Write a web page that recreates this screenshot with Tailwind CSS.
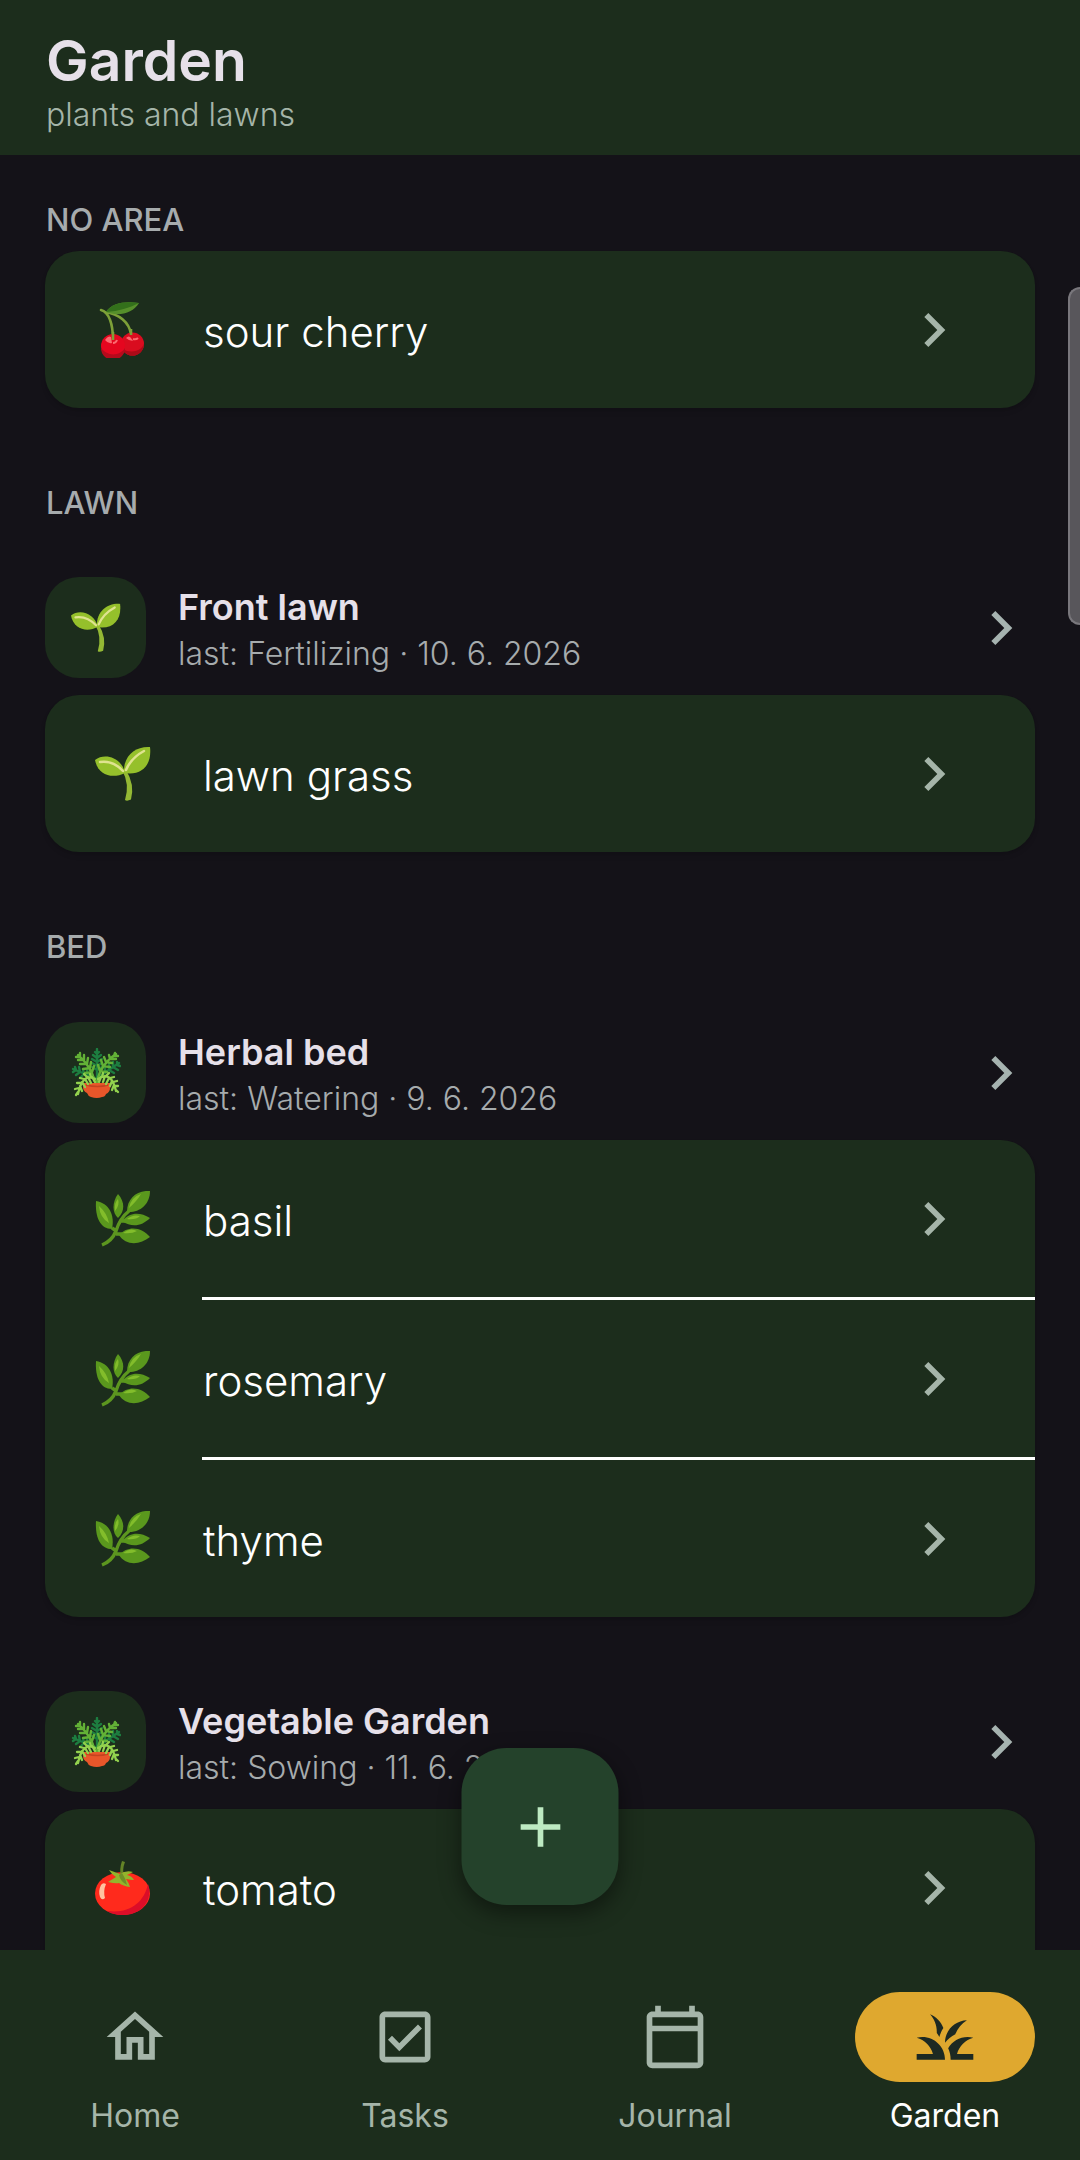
<!DOCTYPE html>
<html lang="en">
<head>
  <meta charset="UTF-8" />
  <meta name="viewport" content="width=device-width, initial-scale=1.0"/>
  <title>Garden</title>
  <script src="https://cdn.jsdelivr.net/npm/@tailwindcss/browser@4"></script>
</head>
<body class="h-screen flex flex-col bg-[#141218] text-[#a5b5a9] font-['Inter','Liberation_Sans',sans-serif]">

  <!-- shared icons -->
  <svg class="hidden">
    <symbol id="chevron" viewBox="0 0 24 24">
      <path fill="currentColor" d="M10 6L8.59 7.41 13.17 12l-4.58 4.59L10 18l6-6z"/>
    </symbol>
    <symbol id="cherry" viewBox="0 0 56 56">
      <path d="M6 8C14 10 18 22 18 38M10 10C24 12 34 20 36 32" fill="none" stroke="#7da038" stroke-width="2.6" stroke-linecap="round"/>
      <path d="M11 10C17 1 29-1 44 1 38 11 24 15 11 10z" fill="#568f2b"/>
      <path d="M11 10C17 1 29-1 44 1 34 6 24 9 11 10z" fill="#33701b"/>
      <circle cx="37.5" cy="42" r="11.5" fill="#d90c1f"/>
      <path d="M27 47a11.5 11.5 0 0 0 22-5c-3 7-12 10-22 5z" fill="#ad0a18"/>
      <circle cx="18" cy="44" r="12" fill="#e5061f"/>
      <path d="M6 46a12 12 0 0 0 24 0c-5 8-17 9-24 0z" fill="#b50a1c"/>
      <path d="M18 38v-8M36 33v-6" stroke="#7da038" stroke-width="2.6"/>
      <path d="M10 38q3-5 6-3l1 6q-4 1-7-3zM31 36q3-3 5 0l2 3q-4 0-7-3z" fill="#fb6a70"/>
      <path d="M18 41q3 0 4-3M38 37q3 1 5-1" stroke="#fb6a70" stroke-width="2" fill="none"/>
    </symbol>
    <symbol id="sprout" viewBox="0 0 56 56">
      <path d="M27 24q8 14 3 30 2 1.500 6-.5 4-15-5-29.500z" fill="#94b934"/>
      <path d="M0 14C10 6 27 12 30 27 18 33 3 30 0 14z" fill="#95c02b"/>
      <path d="M29 27C28 10 40 0 55 1 57 18 48 30 29 27z" fill="#95c02b"/>
      <path d="M5 16Q18 14 28 25M31 24Q36 12 49 5" fill="none" stroke="#dfe38f" stroke-width="2.5" stroke-linecap="round"/>
    </symbol>
    <symbol id="herb" viewBox="0 0 56 56">
      <path d="M7 54q10-4 14-14Q25 27 34 20M26 30h6M21 43h7M17 37l3 2" fill="none" stroke="#5c961f" stroke-width="3.4"/>
      <path d="M1 10C14 12 20 24 17 38 5 38 0 26 1 10z" fill="#5a981d"/>
      <path d="M23 3C30 11 30 20 23 27 17 22 17 11 23 3z" fill="#5a981d"/>
      <path d="M55 0C55 14 44 22 32 21 32 7 42-1 55 0z" fill="#5a981d"/>
      <path d="M27 30C35 21 45 21 55 27 47 35 37 37 27 30z" fill="#5a981d"/>
      <path d="M24 44C33 34 47 36 55 46 45 54 31 55 24 44z" fill="#5a981d"/>
      <path d="M4 15Q12 22 14 32 5 27 4 15zM20 20Q19 12 23 8q2 6-3 12zM34 17Q36 6 46 3 42 10 34 17zM32 28q6-5 13-3-4 4-13 3zM28 42q7-6 14-2-5 3-14 2z" fill="#82bd2b"/>
    </symbol>
    <symbol id="tomato" viewBox="0 0 56 56">
      <ellipse cx="27.5" cy="33.5" rx="27.5" ry="21.5" fill="#ff2a1c"/>
      <path d="M53 24c5 15-5 31-25 31-8 0-13-2-16-4 22 3 37-8 41-27z" fill="#dc0d28"/>
      <path d="M26 18Q24 9 27 1l3 1Q27 9 29 18z" fill="#648327"/>
      <path d="M25 14L14 10q3 5 7 7l-8 5q8 2 11 1 4 3 11 4-1-4-4-8 5 1 8 1-2-4-7-5l6-3q-7-2-13 2z" fill="#93b42c"/>
      <path d="M27 13q4 6 5 12-7-4-8-10z" fill="#6f8f28"/>
      <path d="M6 25q2-3 5-1-3 7-1 14-3 3-5-1-2-6 1-12z" fill="#ffc3a0"/>
    </symbol>
    <symbol id="fern" viewBox="0 0 50 50">
      <g fill="none" stroke="#1d7d40" stroke-width="2.4" stroke-linecap="round">
        <path d="M26 30V1M26 6l-2-2M26 6l2-2M26 10l-4-3M26 10l4-3M26 14l-5-3M26 14l5-3M26 18l-5-3M26 18l5-3M26 22l-5-3M26 22l5-3"/>
        <path d="M24 30L2 21M5 22l-1-3M5 22l-3 2M9 24l-1-5M9 24l-4 3M13 26l-1-5M13 26l-4 4M17 27l-1-5"/>
        <path d="M26 30L48 15M46 17l0-3M46 17l3 1M42 19l0-5M42 19l5 3M38 22l0-6M38 22l5 3M34 25l0-6"/>
      </g>
      <g fill="none" stroke="#62b136" stroke-width="2.4" stroke-linecap="round">
        <path d="M24 34Q20 18 7 7M9 9V5M9 9H5M13 12l0-5M13 12H7M16 16l1-6M16 16l-7 0M19 20l1-6M19 20l-7 1M21 24l2-6M21 24l-7 1"/>
        <path d="M26 34Q29 17 45 6M43 8l1-3M43 8h4M39 11l-1-4M39 11h6M35 14l-2-5M35 14l6 1M32 18l-2-6M32 18l7 1M29 23l-2-6M29 23l7 1"/>
      </g>
      <path d="M13 35h26q2 3 0 5 0 4-4 6-1 3-4 3-5 2-11 0-3-1-4-4-4-2-4-6z" fill="#e8562a"/>
      <path d="M15 37q12 3 22 0" fill="none" stroke="#c4431f" stroke-width="1.5"/>
      <g fill="none" stroke="#93d24e" stroke-width="2.3" stroke-linecap="round">
        <path d="M24 31Q12 24 7 46M21 29l3 5M17 29l3 6M14 31l3 5M11 34l3 5M9 38l2 5M20 29l-1-3M16 29l-3-3M13 31l-4-1M10 35l-4 0M8 40l-4 1M7 44l-2 3"/>
        <path d="M27 31Q40 22 45 43M30 29l-2 5M34 28l-2 6M38 30l-3 6M41 33l-2 5M43 37l-2 5M31 29l1-4M35 28l3-3M39 30l4-1M42 34l4-1M44 38l3 0M45 42l2 2"/>
      </g>
    </symbol>
  </svg>

  <header class="shrink-0 bg-[#1c2d1c] px-[46px] pt-[27px] pb-[21px]">
    <h1 class="text-[57px] leading-[68px] font-semibold text-[#e6e0e9]">Garden</h1>
    <p class="text-[32px] leading-[39px] font-light">plants and lawns</p>
  </header>

  <main class="relative flex-1 min-h-0 overflow-y-auto [scrollbar-width:none] px-[45px] pt-[43px] pb-24">
    <section>
      <h2 class="pl-px text-[31px] leading-[44px] font-medium text-[#a6abad]">NO AREA</h2>
      <ul class="mt-[9px] rounded-[34px] bg-[#1c2d1c] shadow-md">
        <li>
          <a href="#sour-cherry" class="flex items-center h-[157px] pl-[50px] pr-[67px] text-white">
            <svg class="size-14"><use href="#cherry"/></svg>
            <span class="flex-1 pl-[52px] pt-1 text-[42px] leading-[54px] font-light">sour cherry</span>
            <svg class="size-[68px] text-[#a5b5a9]"><use href="#chevron"/></svg>
          </a>
        </li>
      </ul>
    </section>

    <section class="mt-[73px]">
      <h2 class="pl-px text-[31px] leading-[44px] font-medium text-[#a6abad]">LAWN</h2>
      <a href="#front-lawn" class="mt-[52px] flex items-center">
        <span class="size-[101px] rounded-[34px] bg-[#1c2d1c] flex items-center justify-center">
          <svg class="size-[50px]"><use href="#sprout"/></svg>
        </span>
        <span class="flex-1 pl-8 pt-2">
          <span class="block text-[36px] leading-[45px] font-semibold text-[#e6e0e9]">Front lawn</span>
          <span class="block text-[32px] leading-[48px] font-light text-[#a6abad]">last: Fertilizing · 10. 6. 2026</span>
        </span>
        <svg class="size-[68px] text-[#a6b3b0]"><use href="#chevron"/></svg>
      </a>
      <ul class="mt-[17px] rounded-[34px] bg-[#1c2d1c] shadow-md">
        <li>
          <a href="#lawn-grass" class="flex items-center h-[157px] pl-[50px] pr-[67px] text-white">
            <svg class="size-14"><use href="#sprout"/></svg>
            <span class="flex-1 pl-[52px] pt-1 text-[42px] leading-[54px] font-light">lawn grass</span>
            <svg class="size-[68px] text-[#a5b5a9]"><use href="#chevron"/></svg>
          </a>
        </li>
      </ul>
    </section>

    <section class="mt-[73px]">
      <h2 class="pl-px text-[31px] leading-[44px] font-medium text-[#a6abad]">BED</h2>
      <a href="#herbal-bed" class="mt-[53px] flex items-center">
        <span class="size-[101px] rounded-[34px] bg-[#1c2d1c] flex items-center justify-center">
          <svg class="size-[50px]"><use href="#fern"/></svg>
        </span>
        <span class="flex-1 pl-8 pt-2">
          <span class="block text-[36px] leading-[45px] font-semibold text-[#e6e0e9]">Herbal bed</span>
          <span class="block text-[32px] leading-[48px] font-light text-[#a6abad]">last: Watering · 9. 6. 2026</span>
        </span>
        <svg class="size-[68px] text-[#a6b3b0]"><use href="#chevron"/></svg>
      </a>
      <ul class="mt-[17px] rounded-[34px] bg-[#1c2d1c] shadow-md">
        <li>
          <a href="#basil" class="flex items-center h-[157px] pl-[50px] pr-[67px] text-white">
            <svg class="size-14"><use href="#herb"/></svg>
            <span class="flex-1 pl-[52px] pt-1 text-[42px] leading-[54px] font-light">basil</span>
            <svg class="size-[68px] text-[#a5b5a9]"><use href="#chevron"/></svg>
          </a>
        </li>
        <li>
          <hr class="ml-[157px] border-t-3 border-white">
          <a href="#rosemary" class="flex items-center h-[157px] pl-[50px] pr-[67px] text-white">
            <svg class="size-14"><use href="#herb"/></svg>
            <span class="flex-1 pl-[52px] pt-1 text-[42px] leading-[54px] font-light">rosemary</span>
            <svg class="size-[68px] text-[#a5b5a9]"><use href="#chevron"/></svg>
          </a>
        </li>
        <li>
          <hr class="ml-[157px] border-t-3 border-white">
          <a href="#thyme" class="flex items-center h-[157px] pl-[50px] pr-[67px] text-white">
            <svg class="size-14"><use href="#herb"/></svg>
            <span class="flex-1 pl-[52px] pt-1 text-[42px] leading-[54px] font-light">thyme</span>
            <svg class="size-[68px] text-[#a5b5a9]"><use href="#chevron"/></svg>
          </a>
        </li>
      </ul>

      <a href="#vegetable-garden" class="mt-[74px] flex items-center">
        <span class="size-[101px] rounded-[34px] bg-[#1c2d1c] flex items-center justify-center">
          <svg class="size-[50px]"><use href="#fern"/></svg>
        </span>
        <span class="flex-1 pl-8 pt-2">
          <span class="block text-[36px] leading-[45px] font-semibold text-[#e6e0e9]">Vegetable Garden</span>
          <span class="block text-[32px] leading-[48px] font-light text-[#a6abad]">last: Sowing · 11. 6. 2026</span>
        </span>
        <svg class="size-[68px] text-[#a6b3b0]"><use href="#chevron"/></svg>
      </a>
      <ul class="mt-[17px] pb-8 rounded-[34px] bg-[#1c2d1c] shadow-md">
        <li>
          <a href="#tomato-plant" class="flex items-center h-[157px] pl-[50px] pr-[67px] text-white">
            <svg class="size-14"><use href="#tomato"/></svg>
            <span class="flex-1 pl-[52px] pt-1 text-[42px] leading-[54px] font-light">tomato</span>
            <svg class="size-[68px] text-[#a5b5a9]"><use href="#chevron"/></svg>
          </a>
        </li>
      </ul>
    </section>
  </main>

  <!-- edge handle -->
  <div class="fixed right-0 top-[287px] w-3 h-[338px] rounded-l-xl border-2 border-r-0 border-[#79777c] bg-[#58565b]"></div>

  <button type="button" aria-label="Add" class="fixed left-1/2 -translate-x-1/2 bottom-[255px] size-[157px] rounded-[45px] bg-[#24422b] text-[#bdeac2] flex items-center justify-center shadow-[0_8px_22px_rgba(0,0,0,0.45)]">
    <svg class="size-[68px]" viewBox="0 0 24 24"><path fill="currentColor" d="M19 13h-6v6h-2v-6H5v-2h6V5h2v6h6v2z"/></svg>
  </button>

  <nav class="shrink-0 grid grid-cols-4 bg-[#1c2d1c] pt-[42px] pb-[22px] text-[32px] leading-[44px] text-center">
    <a href="#home" class="flex flex-col items-center gap-3">
      <span class="w-[180px] h-[90px] flex items-center justify-center">
        <svg class="size-[68px]" viewBox="0 0 24 24"><path fill="currentColor" d="M12 5.69l5 4.5V18h-2v-6H9v6H7v-7.81l5-4.5M12 3L2 12h3v8h6v-6h2v6h6v-8h3L12 3z"/></svg>
      </span>
      Home
    </a>
    <a href="#tasks" class="flex flex-col items-center gap-3">
      <span class="w-[180px] h-[90px] flex items-center justify-center">
        <svg class="size-[68px]" viewBox="0 0 24 24"><path fill="currentColor" d="M19 3H5c-1.1 0-2 .9-2 2v14c0 1.1.9 2 2 2h14c1.1 0 2-.9 2-2V5c0-1.1-.9-2-2-2zm0 16H5V5h14v14zM17.99 9l-1.41-1.42-6.59 6.59-2.58-2.57-1.42 1.41 4 3.99z"/></svg>
      </span>
      Tasks
    </a>
    <a href="#journal" class="flex flex-col items-center gap-3">
      <span class="w-[180px] h-[90px] flex items-center justify-center">
        <svg class="size-[68px]" viewBox="0 0 24 24"><path fill="currentColor" d="M20 3h-1V1h-2v2H7V1H5v2H4c-1.1 0-2 .9-2 2v16c0 1.1.9 2 2 2h16c1.1 0 2-.9 2-2V5c0-1.1-.9-2-2-2zm0 18H4V10h16v11zm0-13H4V5h16v3z"/></svg>
      </span>
      Journal
    </a>
    <a href="#garden" aria-current="page" class="flex flex-col items-center gap-3 text-white">
      <span class="w-[180px] h-[90px] rounded-full bg-[#dfa82f] text-[#1d2922] flex items-center justify-center">
        <svg class="size-[68px]" viewBox="0 0 24 24"><path fill="currentColor" d="M12 20H2v-2h5.75C7.02 15.19 4.81 12.99 2 12.26 2.64 12.1 3.31 12 4 12c4.42 0 8 3.58 8 8zm10-7.74c-.64-.16-1.31-.26-2-.26-2.93 0-5.48 1.58-6.88 3.93.29.66.53 1.35.67 2.07.13.65.2 1.32.2 2h8v-2h-5.75c.74-2.81 2.95-5.01 5.76-5.74zM15.64 11.02c.78-2.09 2.23-3.84 4.09-4.97C15.44 6.16 12 9.67 12 14v.02c.95-1.27 2.2-2.3 3.64-3zM11.42 8.85C10.58 6.66 8.88 4.89 6.7 4c1.6 1.7 2.5 4 2.4 6.6.3.4.6.8.9 1.4.3-1.1.8-2.2 1.42-3.15z"/></svg>
      </span>
      Garden
    </a>
  </nav>

</body>
</html>
